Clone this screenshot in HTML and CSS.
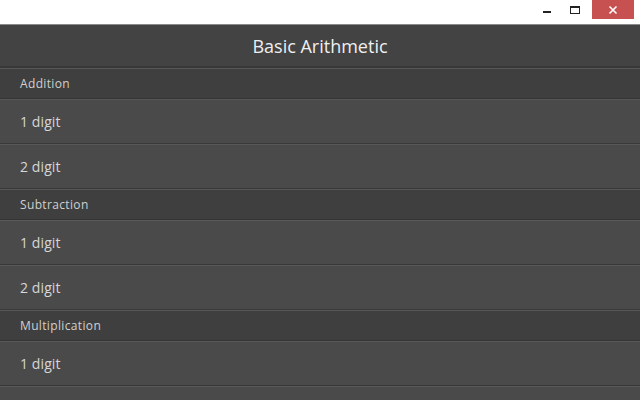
FILE: index.html
```
<!DOCTYPE html>
<html>
<head>
<meta charset="utf-8">
<link rel="stylesheet" href="styles.css">
</head>
<body>
<div class="window">
  <div class="titlebar">
    <div class="controls">
      <div class="ctl min"><svg width="10" height="10" viewBox="0 0 10 10"><rect x="1" y="6" width="8" height="2" fill="#222"/></svg></div>
      <div class="ctl max"><svg width="12" height="10" viewBox="0 0 12 10"><rect x="1.5" y="1.5" width="9" height="7" fill="none" stroke="#222" stroke-width="1"/><rect x="1" y="1" width="10" height="2" fill="#222"/></svg></div>
      <div class="ctl close"><svg width="10" height="10" viewBox="0 0 10 10"><path d="M1.5 1.5 L8.5 8.5 M8.5 1.5 L1.5 8.5" stroke="#fff" stroke-width="1.6"/></svg></div>
    </div>
  </div>
  <div class="appbar"><span class="title">Basic Arithmetic</span></div>
  <div class="list">
    <div class="section">Addition</div>
    <div class="item">1 digit</div>
    <div class="item">2 digit</div>
    <div class="section">Subtraction</div>
    <div class="item">1 digit</div>
    <div class="item">2 digit</div>
    <div class="section">Multiplication</div>
    <div class="item">1 digit</div>
    <div class="item"></div>
  </div>
</div>
</body>
</html>
```
FILE: styles.css
```
html, body {
  margin: 0;
  padding: 0;
  width: 640px;
  height: 400px;
  overflow: hidden;
  background: #494949;
  font-family: "Open Sans", "Noto Sans", sans-serif;
}
.window {
  display: flex;
  flex-direction: column;
  width: 640px;
  height: 400px;
  overflow: hidden;
}
.titlebar {
  height: 24px;
  background: #ffffff;
  border-bottom: 1px solid #8a8a8a;
  display: flex;
  justify-content: flex-end;
  flex-shrink: 0;
}
.controls {
  display: flex;
  align-items: flex-start;
  margin-right: 6px;
}
.ctl {
  display: flex;
  align-items: center;
  justify-content: center;
  height: 19px;
}
.min { width: 26px; margin-right: 2px; }
.max { width: 26px; margin-right: 4px; }
.close {
  width: 42px;
  background: #c75050;
}
.appbar {
  height: 41px;
  background: #434343;
  border-bottom: 2px solid #383838;
  display: flex;
  align-items: center;
  justify-content: center;
  flex-shrink: 0;
}
.title {
  color: #efefef;
  font-size: 18px;
  letter-spacing: 0px;
}
.list {
  display: flex;
  flex-direction: column;
  flex-shrink: 0;
}
.section {
  height: 29px;
  background: #3f3f3f;
  border-top: 1px solid #575757;
  border-bottom: 1px solid #353535;
  color: #d0d0d0;
  font-size: 12px;
  letter-spacing: 0.35px;
  display: flex;
  align-items: center;
  padding-left: 20px;
  flex-shrink: 0;
}
.item {
  height: 43px;
  background: #4a4a4a;
  border-top: 1px solid #585858;
  border-bottom: 1px solid #393939;
  color: #d6d6d6;
  font-size: 14px;
  letter-spacing: 0.1px;
  display: flex;
  align-items: center;
  padding-left: 20px;
  flex-shrink: 0;
}
```
